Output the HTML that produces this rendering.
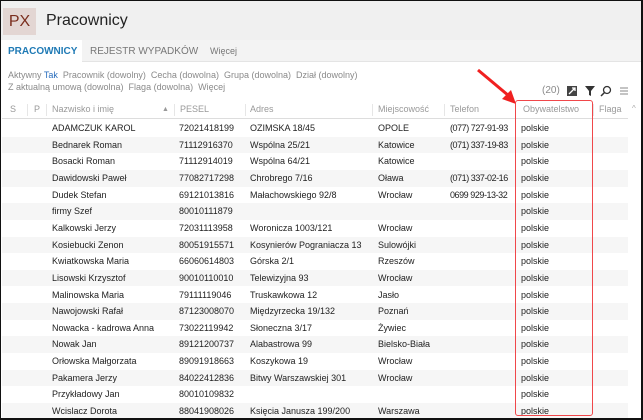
<!DOCTYPE html>
<html><head><meta charset="utf-8"><style>
*{margin:0;padding:0;box-sizing:border-box}
body{width:643px;height:420px;overflow:hidden;background:#fff;font-family:"Liberation Sans",sans-serif;position:relative}
.frame{position:absolute;left:0;top:0;width:643px;height:420px;border:1px solid #111;border-right:2px solid #111;border-bottom:2px solid #111;z-index:10;pointer-events:none}
.top{position:absolute;left:0;top:0;width:643px;height:40px;background:#f0f0f0}
.logo{position:absolute;left:3px;top:8px;width:33px;height:27px;background:#e3d6d3;color:#7a2e1e;font-size:16px;line-height:27px;text-align:center}
.title{position:absolute;left:46px;top:12px;font-size:16px;color:#222}
.tabs{position:absolute;left:0;top:40px;width:643px;height:22px;border-bottom:1px solid #e4e4e4;font-size:10px}
.tab{position:absolute;top:6px;color:#777}
.t1{left:0;top:0;height:22px;width:82px;background:#fff;color:#1f7ab5;font-weight:bold;padding:6px 0 0 8px}
.tabsbg{position:absolute;left:82px;top:40px;width:561px;height:22px;background:#f3f3f3}
.f{position:absolute;font-size:9px;color:#8a8a8a;white-space:nowrap}
.f b{font-weight:normal;color:#2a6ebd}
.row{position:absolute;left:2px;width:626px;height:16.65px;font-size:9px;color:#222}
.row.s{background:#f6f6f6}
.row span,.hd span{position:absolute;top:3px;white-space:nowrap}
.row span:nth-child(5):not(:last-child){letter-spacing:-0.45px}
.hd{position:absolute;left:2px;top:101px;width:626px;height:18px;border-bottom:1px solid #ddd;font-size:9px;color:#999}
.hd i{position:absolute;top:3px;width:1px;height:12px;background:#e6e6e6}
.red{position:absolute;left:515px;top:100px;width:78px;height:316px;border:1.5px solid #f0474a;border-radius:3px}
</style></head><body>
<div class="top"><div class="logo">PX</div><div class="title">Pracownicy</div></div>
<div class="tabsbg"></div>
<div class="tabs"><div class="tab t1">PRACOWNICY</div><div class="tab" style="left:90px">REJESTR WYPADKÓW</div><div class="tab" style="left:210px;font-size:9px">Więcej</div></div>
<div class="f" style="left:8px;top:70px">Aktywny <b>Tak</b> &nbsp;Pracownik (dowolny) &nbsp;Cecha (dowolna) &nbsp;Grupa (dowolna) &nbsp;Dział (dowolny)</div>
<div class="f" style="left:8px;top:82px">Z aktualną umową (dowolna) &nbsp;Flaga (dowolna) &nbsp;Więcej</div>
<div class="f" style="left:542px;top:85px;font-size:10px">(20)</div>
<svg style="position:absolute;left:566px;top:84px" width="64" height="14">
<rect x="1" y="2" width="10" height="10" fill="#444"/><path d="M3 10 L9 4 M6 4 H9 V7" stroke="#fff" stroke-width="1.3" fill="none"/>
<path d="M19 2 H29 L25 7 V12 L23 11 V7 Z" fill="#333"/>
<circle cx="41" cy="6" r="3.5" stroke="#333" stroke-width="1.3" fill="none"/><path d="M38.5 8.5 L35 12" stroke="#333" stroke-width="1.5"/>
<path d="M54 4 H62 M54 7 H62 M54 10 H62" stroke="#888" stroke-width="1"/>
</svg>
<svg style="position:absolute;left:476px;top:68px" width="44" height="40"><path d="M2 2 L33 28" stroke="#f02020" stroke-width="3"/><path d="M40 36 L26 31 L35 22 Z" fill="#f02020"/></svg>
<div class="hd"><span style="left:8px">S</span><i style="left:25px"></i><span style="left:32px">P</span><i style="left:44px"></i><span style="left:50px">Nazwisko i imię</span><span style="left:160px;font-size:7px;top:5px">▲</span><i style="left:172px"></i><span style="left:178px">PESEL</span><i style="left:243px"></i><span style="left:248px">Adres</span><i style="left:370px"></i><span style="left:376px">Miejscowość</span><i style="left:442px"></i><span style="left:448px">Telefon</span><i style="left:513px"></i><span style="left:521px">Obywatelstwo</span><i style="left:591px"></i><span style="left:597px">Flaga</span></div>
<div class="row" style="top:120px"><span style="left:50px">ADAMCZUK KAROL</span><span style="left:177px">72021418199</span><span style="left:248px">OZIMSKA 18/45</span><span style="left:376px">OPOLE</span><span style="left:448px">(077) 727-91-93</span><span style="left:519px">polskie</span></div>
<div class="row s" style="top:136.65px"><span style="left:50px">Bednarek Roman</span><span style="left:177px">71112916370</span><span style="left:248px">Wspólna 25/21</span><span style="left:376px">Katowice</span><span style="left:448px">(071) 337-19-83</span><span style="left:519px">polskie</span></div>
<div class="row" style="top:153.3px"><span style="left:50px">Bosacki Roman</span><span style="left:177px">71112914019</span><span style="left:248px">Wspólna 64/21</span><span style="left:376px">Katowice</span><span style="left:519px">polskie</span></div>
<div class="row s" style="top:169.95px"><span style="left:50px">Dawidowski Paweł</span><span style="left:177px">77082717298</span><span style="left:248px">Chrobrego 7/16</span><span style="left:376px">Oława</span><span style="left:448px">(071) 337-02-16</span><span style="left:519px">polskie</span></div>
<div class="row" style="top:186.6px"><span style="left:50px">Dudek Stefan</span><span style="left:177px">69121013816</span><span style="left:248px">Małachowskiego 92/8</span><span style="left:376px">Wrocław</span><span style="left:448px">0699 929-13-32</span><span style="left:519px">polskie</span></div>
<div class="row s" style="top:203.25px"><span style="left:50px">firmy Szef</span><span style="left:177px">80010111879</span><span style="left:519px">polskie</span></div>
<div class="row" style="top:219.9px"><span style="left:50px">Kalkowski Jerzy</span><span style="left:177px">72031113958</span><span style="left:248px">Woronicza 1003/121</span><span style="left:376px">Wrocław</span><span style="left:519px">polskie</span></div>
<div class="row s" style="top:236.55px"><span style="left:50px">Kosiebucki Zenon</span><span style="left:177px">80051915571</span><span style="left:248px">Kosynierów Pograniacza 13</span><span style="left:376px">Sulowójki</span><span style="left:519px">polskie</span></div>
<div class="row" style="top:253.2px"><span style="left:50px">Kwiatkowska Maria</span><span style="left:177px">66060614803</span><span style="left:248px">Górska 2/1</span><span style="left:376px">Rzeszów</span><span style="left:519px">polskie</span></div>
<div class="row s" style="top:269.85px"><span style="left:50px">Lisowski Krzysztof</span><span style="left:177px">90010110010</span><span style="left:248px">Telewizyjna 93</span><span style="left:376px">Wrocław</span><span style="left:519px">polskie</span></div>
<div class="row" style="top:286.5px"><span style="left:50px">Malinowska Maria</span><span style="left:177px">79111119046</span><span style="left:248px">Truskawkowa 12</span><span style="left:376px">Jasło</span><span style="left:519px">polskie</span></div>
<div class="row s" style="top:303.15px"><span style="left:50px">Nawojowski Rafał</span><span style="left:177px">87123008070</span><span style="left:248px">Międzyrzecka 19/132</span><span style="left:376px">Poznań</span><span style="left:519px">polskie</span></div>
<div class="row" style="top:319.8px"><span style="left:50px">Nowacka - kadrowa Anna</span><span style="left:177px">73022119942</span><span style="left:248px">Słoneczna 3/17</span><span style="left:376px">Żywiec</span><span style="left:519px">polskie</span></div>
<div class="row s" style="top:336.45px"><span style="left:50px">Nowak Jan</span><span style="left:177px">89121200737</span><span style="left:248px">Alabastrowa 99</span><span style="left:376px">Bielsko-Biała</span><span style="left:519px">polskie</span></div>
<div class="row" style="top:353.1px"><span style="left:50px">Orłowska Małgorzata</span><span style="left:177px">89091918663</span><span style="left:248px">Koszykowa 19</span><span style="left:376px">Wrocław</span><span style="left:519px">polskie</span></div>
<div class="row s" style="top:369.75px"><span style="left:50px">Pakamera Jerzy</span><span style="left:177px">84022412836</span><span style="left:248px">Bitwy Warszawskiej 301</span><span style="left:376px">Wrocław</span><span style="left:519px">polskie</span></div>
<div class="row" style="top:386.4px"><span style="left:50px">Przykładowy Jan</span><span style="left:177px">80010109832</span><span style="left:519px">polskie</span></div>
<div class="row s" style="top:403.05px"><span style="left:50px">Wcislacz Dorota</span><span style="left:177px">88041908026</span><span style="left:248px">Księcia Janusza 199/200</span><span style="left:376px">Warszawa</span><span style="left:519px">polskie</span></div>
<div style="position:absolute;left:632px;top:104px;font-size:8px;color:#aaa">^</div>
<div class="red"></div>
<div class="frame"></div>
</body></html>
